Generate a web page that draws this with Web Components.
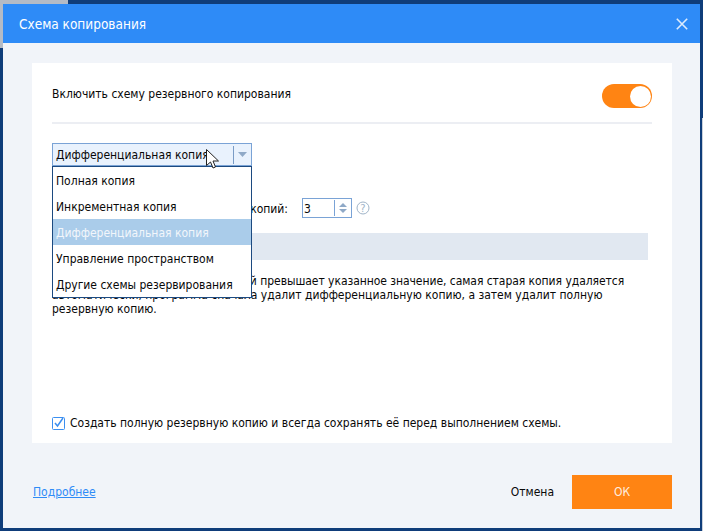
<!DOCTYPE html>
<html><head><meta charset="utf-8"><style>
html,body{margin:0;height:100%}
body{background:linear-gradient(#b4bbc6,#b4bbc6) 0 0/68px 4px no-repeat,linear-gradient(#b4bbc6,#b4bbc6) 0 0/3px 48px no-repeat,linear-gradient(#c9d0da,#c9d0da) 702px 118px/1px 413px no-repeat,#0f3d7a;font:12px "DejaVu Sans Condensed","DejaVu Sans",sans-serif;font-stretch:condensed;color:#080808}
</style></head><body>
<backup-dialog>
<span slot="title">Схема копирования</span>
</backup-dialog>
<script>
class ToggleSwitch extends HTMLElement{constructor(){super();this.attachShadow({mode:'open'}).innerHTML=`<style>:host{display:block;width:50px;height:24px;border-radius:12px;background:#ff8413;position:relative;flex:none}i{position:absolute;right:1px;top:1.500px;width:21px;height:21px;border-radius:50%;background:#fff}</style><i></i>`}}
customElements.define('toggle-switch',ToggleSwitch);
class TypeSelect extends HTMLElement{constructor(){super();this.attachShadow({mode:'open'}).innerHTML=`<style>
:host{display:block;position:relative;width:200px;height:23px}
.box{box-sizing:border-box;height:23px;border:1px solid #7aa3d6;background:#e9f2fd;display:flex;align-items:center;padding-left:3px}
.t{flex:1;white-space:nowrap;overflow:hidden}
.sep{width:1px;height:18px;background:#7a9cc6}
.arr{width:17px;display:flex;justify-content:center}
.arr svg{display:block}
.menu{position:absolute;left:0;top:23px;width:200px;box-sizing:border-box;border:1px solid #1c4a80;background:#fff;z-index:2}
.menu div{height:26px;line-height:28px;padding-left:3px;white-space:nowrap}
.menu .sel{background:#aaccea;color:#f2f6fb}
.cursor{position:absolute;left:154px;top:6px;z-index:3}
</style>
<div class="box"><span class="t">Дифференциальная копия</span><span class="sep"></span><span class="arr"><svg width="9" height="5"><path d="M0 0h9L4.500 5z" fill="#8fa9c7"/></svg></span></div>
<div class="menu"><div>Полная копия</div><div>Инкрементная копия</div><div class="sel">Дифференциальная копия</div><div>Управление пространством</div><div>Другие схемы резервирования</div></div>
<svg class="cursor" width="13" height="20" viewBox="0 0 13 20"><path d="M.5.500v16l4-3.500 2.500 6 2.500-1-2.500-6h5.500z" fill="#fff" stroke="#222" stroke-width="1"/></svg>`}}
customElements.define('type-select',TypeSelect);
class NumSpin extends HTMLElement{constructor(){super();this.attachShadow({mode:'open'}).innerHTML=`<style>
:host{display:flex;box-sizing:border-box;width:50px;height:20px;border:1px solid #7aa3d6;align-items:center;padding-left:1px;background:#fff;flex:none}
span{flex:1;padding-top:1px}i{width:1px;height:16px;background:#7aa3d6;margin-right:4px}
svg{margin-right:4px;display:block}
</style><span><slot></slot></span><i></i><svg width="8" height="14"><path d="M0 6L4 2 8 6z" fill="#8fa9c7"/><path d="M0 8L4 12 8 8z" fill="#8fa9c7"/></svg>`}}
customElements.define('num-spin',NumSpin);
class BackupDialog extends HTMLElement{constructor(){super();this.attachShadow({mode:'open'}).innerHTML=`<style>
:host{display:flex;flex-direction:column;box-sizing:border-box;position:absolute;left:3px;top:4px;width:697px;height:524px;background:#f1f4f9}
header{height:39px;background:#2e8bf7;color:#fff;display:flex;align-items:center;justify-content:space-between;padding:0 12px 0 16px;font-size:13.500px;flex:none}
.card{flex:none;margin:20px 0 0 29px;height:380px;width:640px;background:#fff;box-sizing:border-box;padding:0 20px 10px;display:flex;flex-direction:column}
.top{height:61px;border-bottom:2px solid #eceef3;display:flex;align-items:flex-start;justify-content:space-between;box-sizing:border-box;flex:none}
.top span{margin-top:24px}
.top toggle-switch{margin-top:21px}
.sel{margin-top:19px;flex:none}
.row{display:flex;align-items:center;margin-top:32px;height:20px;flex:none}
.row .l{width:236px;text-align:right;white-space:nowrap;padding-top:2px}
.row num-spin{margin-left:14px}
.q{margin-left:4px}
.bar{height:27px;background:#e1e8f1;margin-top:15px;margin-right:4px;flex:none}
.desc{margin-top:14px;line-height:14px;white-space:nowrap}
.desc span{letter-spacing:-.05px}
.chk{display:flex;align-items:center;gap:5px;height:20px;margin-top:auto}
.chk svg{display:block;flex:none}
footer{display:flex;align-items:center;padding:0 28px 0 30px;margin-top:32px}
a{color:#2e8bf7;text-decoration:underline}
.cancel{margin-left:auto;margin-right:18px}
.ok{width:100px;height:34px;background:#ff8413;color:#fdeee0;display:flex;align-items:center;justify-content:center}
</style>
<header><slot name="title"></slot><svg width="12" height="12" viewBox="0 0 12 12"><path d="M.8.800l10.400 10.400M11.200.800L.8 11.200" stroke="#dcebfd" stroke-width="1.600"/></svg></header>
<div class="card">
<div class="top"><span>Включить схему резервного копирования</span><toggle-switch></toggle-switch></div>
<type-select class="sel"></type-select>
<div class="row"><span class="l">Количество сохраняемых копий:</span><num-spin>3</num-spin><svg class="q" width="14" height="14" viewBox="0 0 14 14"><circle cx="7" cy="7" r="6" fill="none" stroke="#a0b4c8"/><text x="7" y="10.800" text-anchor="middle" font-size="11" fill="#a0b4c8" font-family="DejaVu Sans">?</text></svg></div>
<div class="bar"></div>
<div class="desc">Когда количество резервных копий <span>превышает указанное значение, самая старая копия удаляется</span><br>автоматически, программа сначала удалит дифференциальную копию, а затем удалит полную<br>резервную копию.</div>
<div class="chk"><svg width="13" height="14" viewBox="0 0 13 14"><rect x=".5" y="1.500" width="12" height="12" rx="1" fill="#fff" stroke="#3b8ff0"/><path d="M3 7l2.500 3 5.500-8" fill="none" stroke="#3b8ff0" stroke-width="1.500"/></svg><span>Создать полную резервную копию и всегда сохранять её перед выполнением схемы.</span></div>
</div>
<footer><a>Подробнее</a><span class="cancel">Отмена</span><span class="ok">ОК</span></footer>`}}
customElements.define('backup-dialog',BackupDialog);
</script></body></html>
